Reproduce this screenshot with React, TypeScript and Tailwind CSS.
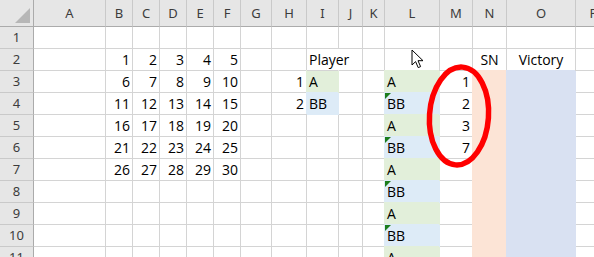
import React from 'react';

const COLS = ['A', 'B', 'C', 'D', 'E', 'F', 'G', 'H', 'I', 'J', 'K', 'L', 'M', 'N', 'O', 'P'];
const ROWS = [1, 2, 3, 4, 5, 6, 7, 8, 9, 10, 11];

type Fill = 'green' | 'blue' | 'peach' | 'lav' | null;
type Align = 'left' | 'right' | 'center';

const FILL_CLASS: Record<string, string> = {
  green: 'bg-[#e2efda] border-[#e2efda] shadow-[-1px_-1px_0_0_#e2efda]',
  blue: 'bg-[#ddebf7] border-[#ddebf7] shadow-[-1px_-1px_0_0_#ddebf7]',
  peach: 'bg-[#fce4d6] border-[#fce4d6] shadow-[-1px_-1px_0_0_#fce4d6]',
  lav: 'bg-[#d9e1f2] border-[#d9e1f2] shadow-[-1px_-1px_0_0_#d9e1f2]',
};

const ALIGN_CLASS: Record<Align, string> = {
  left: 'text-left pl-[2px]',
  right: 'text-right pr-[2px]',
  center: 'text-center',
};

function cellInfo(col: string, row: number) {
  let text = '';
  let align: Align = 'left';
  let fill: Fill = null;
  let marker = false;
  let overflow = false;

  const numCol = 'BCDEF'.indexOf(col);
  if (numCol >= 0 && row >= 2 && row <= 7) {
    text = String((row - 2) * 5 + numCol + 1);
    align = 'right';
  }
  if (col === 'H' && (row === 3 || row === 4)) {
    text = String(row - 2);
    align = 'right';
  }
  if (col === 'I') {
    if (row === 2) {
      text = 'Player';
      overflow = true;
    }
    if (row === 3) {
      text = 'A';
      fill = 'green';
    }
    if (row === 4) {
      text = 'BB';
      fill = 'blue';
    }
  }
  if (col === 'L' && row >= 3) {
    const odd = row % 2 === 1;
    text = odd ? 'A' : 'BB';
    fill = odd ? 'green' : 'blue';
    marker = !odd;
  }
  if (col === 'M' && row >= 3 && row <= 6) {
    text = ['1', '2', '3', '7'][row - 3];
    align = 'right';
  }
  if (col === 'N') {
    if (row === 2) {
      text = 'SN';
      align = 'center';
    } else if (row >= 3) fill = 'peach';
  }
  if (col === 'O') {
    if (row === 2) {
      text = 'Victory';
      align = 'center';
    } else if (row >= 3) fill = 'lav';
  }
  return { text, align, fill, marker, overflow };
}

function Cell({ col, row }: { col: string; row: number }) {
  const { text, align, fill, marker, overflow } = cellInfo(col, row);
  const base = fill ? FILL_CLASS[fill] : overflow ? 'border-b-[#d4d4d4] border-r-transparent' : 'border-[#d4d4d4]';
  return (
    <div
      className={`relative border-r border-b whitespace-nowrap leading-[21px] text-[14px] text-black ${base} ${ALIGN_CLASS[align]} ${
        overflow ? 'overflow-visible z-10' : 'overflow-hidden'
      }`}
    >
      {marker && (
        <svg className="absolute left-0 top-0" width="6" height="6" viewBox="0 0 6 6">
          <path d="M0 0H6L0 6Z" fill="#1c7d1c" />
        </svg>
      )}
      {text}
    </div>
  );
}

export default function App() {
  return (
    <div
      className="relative w-[594px] h-[257px] overflow-hidden bg-white"
      style={{ fontFamily: '"Open Sans", "Noto Sans", sans-serif' }}
    >
      <div className="grid grid-cols-[34px_72px_27px_27px_27px_27px_27px_31px_35px_32px_24px_22px_55px_33px_34px_69px_36px] grid-rows-[27px_repeat(11,22px)] w-[612px]">
        {/* Corner */}
        <div className="relative bg-[#e6e6e6] border-r border-b border-r-[#ababab] border-b-[#ababab]">
          <svg className="absolute left-[15px] top-[8px]" width="15" height="15" viewBox="0 0 15 15">
            <path d="M15 0V15H0Z" fill="#b7b7b7" />
          </svg>
        </div>
        {/* Column headers */}
        {COLS.map((c) => (
          <div
            key={c}
            className="bg-[#e6e6e6] border-r border-b border-r-[#c9c9c9] border-b-[#ababab] text-center leading-[26px] text-[13px] text-[#3c3c3c]"
            style={{ fontFamily: '"Noto Sans", "Open Sans", sans-serif' }}
          >
            {c}
          </div>
        ))}
        {ROWS.map((r) => (
          <React.Fragment key={r}>
            <div
              className="bg-[#e6e6e6] border-r border-b border-r-[#ababab] border-b-[#c9c9c9] text-center leading-[21px] text-[13px] text-[#3c3c3c]"
              style={{ fontFamily: '"Noto Sans", "Open Sans", sans-serif' }}
            >
              {r}
            </div>
            {COLS.map((c) => (
              <Cell key={c + r} col={c} row={r} />
            ))}
          </React.Fragment>
        ))}
      </div>

      {/* Red ellipse annotation */}
      <svg className="absolute left-[420px] top-[58px] pointer-events-none" width="80" height="116" viewBox="0 0 80 116">
        <ellipse cx="39" cy="58" rx="29.5" ry="49" fill="none" stroke="#ff0000" strokeWidth="5.5" transform="rotate(4 39 58)" />
      </svg>

      {/* Mouse cursor */}
      <svg className="absolute left-[411px] top-[49px] pointer-events-none" width="14" height="21" viewBox="0 0 14 21">
        <path d="M1 1V16L4.6 12.6L7.2 18.6L9.6 17.6L7 11.7H12Z" fill="#ffffff" stroke="#000000" strokeWidth="1" strokeLinejoin="miter" />
      </svg>
    </div>
  );
}
